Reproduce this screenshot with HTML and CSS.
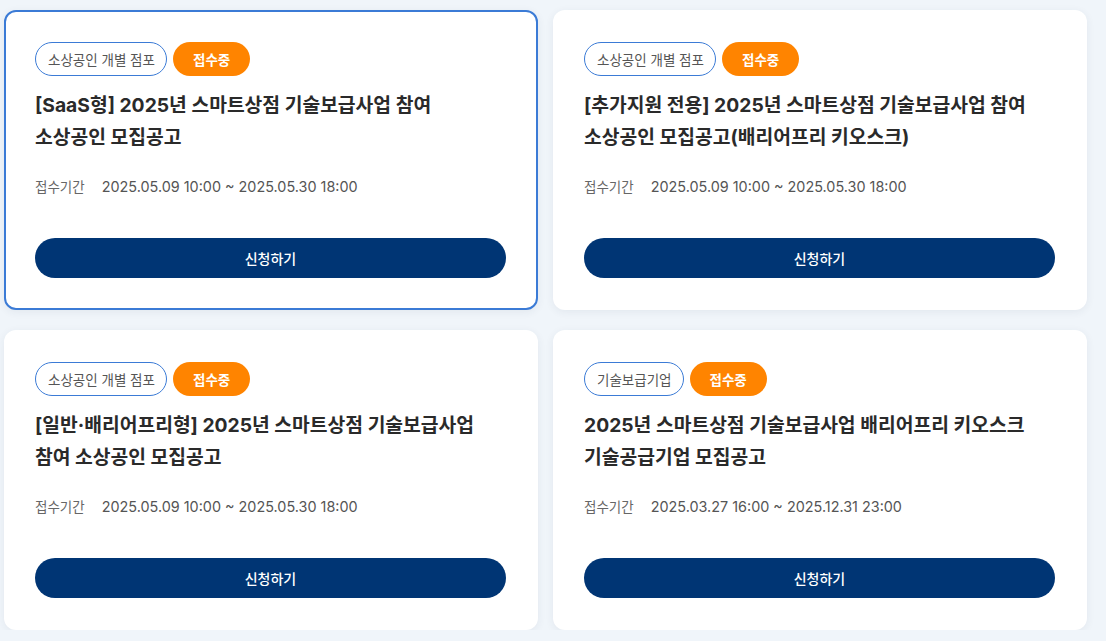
FILE: index.html
```html
<!DOCTYPE html>
<html lang="ko">
<head>
    <meta charset="UTF-8">
    <title>모집공고</title>
    <link rel="stylesheet" href="styles.css">
</head>
<body>
    <div class="notice-list">
        <div class="notice-card active">
            <div class="chips">
                <span class="chip chip-target">소상공인 개별 점포</span>
                <span class="chip chip-status">접수중</span>
            </div>
            <h2 class="notice-title">[SaaS형] 2025년 스마트상점 기술보급사업 참여<br>소상공인 모집공고</h2>
            <div class="period">
                <span class="period-label">접수기간</span>
                <span class="period-date">2025.05.09 10:00 ~ 2025.05.30 18:00</span>
            </div>
            <button class="apply-button">신청하기</button>
        </div>
        <div class="notice-card">
            <div class="chips">
                <span class="chip chip-target">소상공인 개별 점포</span>
                <span class="chip chip-status">접수중</span>
            </div>
            <h2 class="notice-title">[추가지원 전용] 2025년 스마트상점 기술보급사업 참여<br>소상공인 모집공고(배리어프리 키오스크)</h2>
            <div class="period">
                <span class="period-label">접수기간</span>
                <span class="period-date">2025.05.09 10:00 ~ 2025.05.30 18:00</span>
            </div>
            <button class="apply-button">신청하기</button>
        </div>
        <div class="notice-card">
            <div class="chips">
                <span class="chip chip-target">소상공인 개별 점포</span>
                <span class="chip chip-status">접수중</span>
            </div>
            <h2 class="notice-title">[일반·배리어프리형] 2025년 스마트상점 기술보급사업<br>참여 소상공인 모집공고</h2>
            <div class="period">
                <span class="period-label">접수기간</span>
                <span class="period-date">2025.05.09 10:00 ~ 2025.05.30 18:00</span>
            </div>
            <button class="apply-button">신청하기</button>
        </div>
        <div class="notice-card">
            <div class="chips">
                <span class="chip chip-target">기술보급기업</span>
                <span class="chip chip-status">접수중</span>
            </div>
            <h2 class="notice-title">2025년 스마트상점 기술보급사업 배리어프리 키오스크<br>기술공급기업 모집공고</h2>
            <div class="period">
                <span class="period-label">접수기간</span>
                <span class="period-date">2025.03.27 16:00 ~ 2025.12.31 23:00</span>
            </div>
            <button class="apply-button">신청하기</button>
        </div>
    </div>
</body>
</html>
```

FILE: styles.css
```css
body {
    margin: 0;
    background-color: #f0f5fa;
    font-family: Inter, "Noto Sans CJK KR", sans-serif;
    color: #222;
}
.notice-list {
    display: grid;
    grid-template-columns: 534px 534px;
    column-gap: 15px;
    row-gap: 20px;
    padding: 10px 0 0 4px;
}
.notice-card {
    display: flex;
    flex-direction: column;
    background-color: #ffffff;
    border: 2px solid transparent;
    border-radius: 12px;
    padding: 30px 30px 30px 29px;
    box-shadow: 0 2px 8px rgba(40, 60, 90, 0.07);
}
.notice-card.active {
    border-color: #3b7bd6;
}
.chips {
    display: flex;
    gap: 6px;
}
.chip {
    display: inline-flex;
    align-items: center;
    height: 34px;
    box-sizing: border-box;
    border-radius: 17px;
    font-size: 13.5px;
}
.chip-target {
    border: 1px solid #3b7bd6;
    color: #555;
    padding: 0 11px 0 12px;
}
.chip-status {
    background-color: #ff8400;
    color: #ffffff;
    font-weight: 700;
    padding: 0 20px;
}
.notice-title {
    margin: 13px 0 0;
    font-size: 19.3px;
    line-height: 32px;
    font-weight: 700;
    color: #2a2a2a;
}
.period {
    display: flex;
    align-items: center;
    margin-top: 21px;
    height: 24px;
}
.period-label {
    font-size: 13.5px;
    color: #666;
    margin-right: 17px;
}
.period-date {
    font-size: 14.4px;
    color: #555;
}
.apply-button {
    margin-top: 40px;
    height: 40px;
    border: none;
    border-radius: 20px;
    background-color: #003574;
    color: #ffffff;
    font-family: inherit;
    font-size: 14px;
    font-weight: 500;
    cursor: pointer;
}
```
